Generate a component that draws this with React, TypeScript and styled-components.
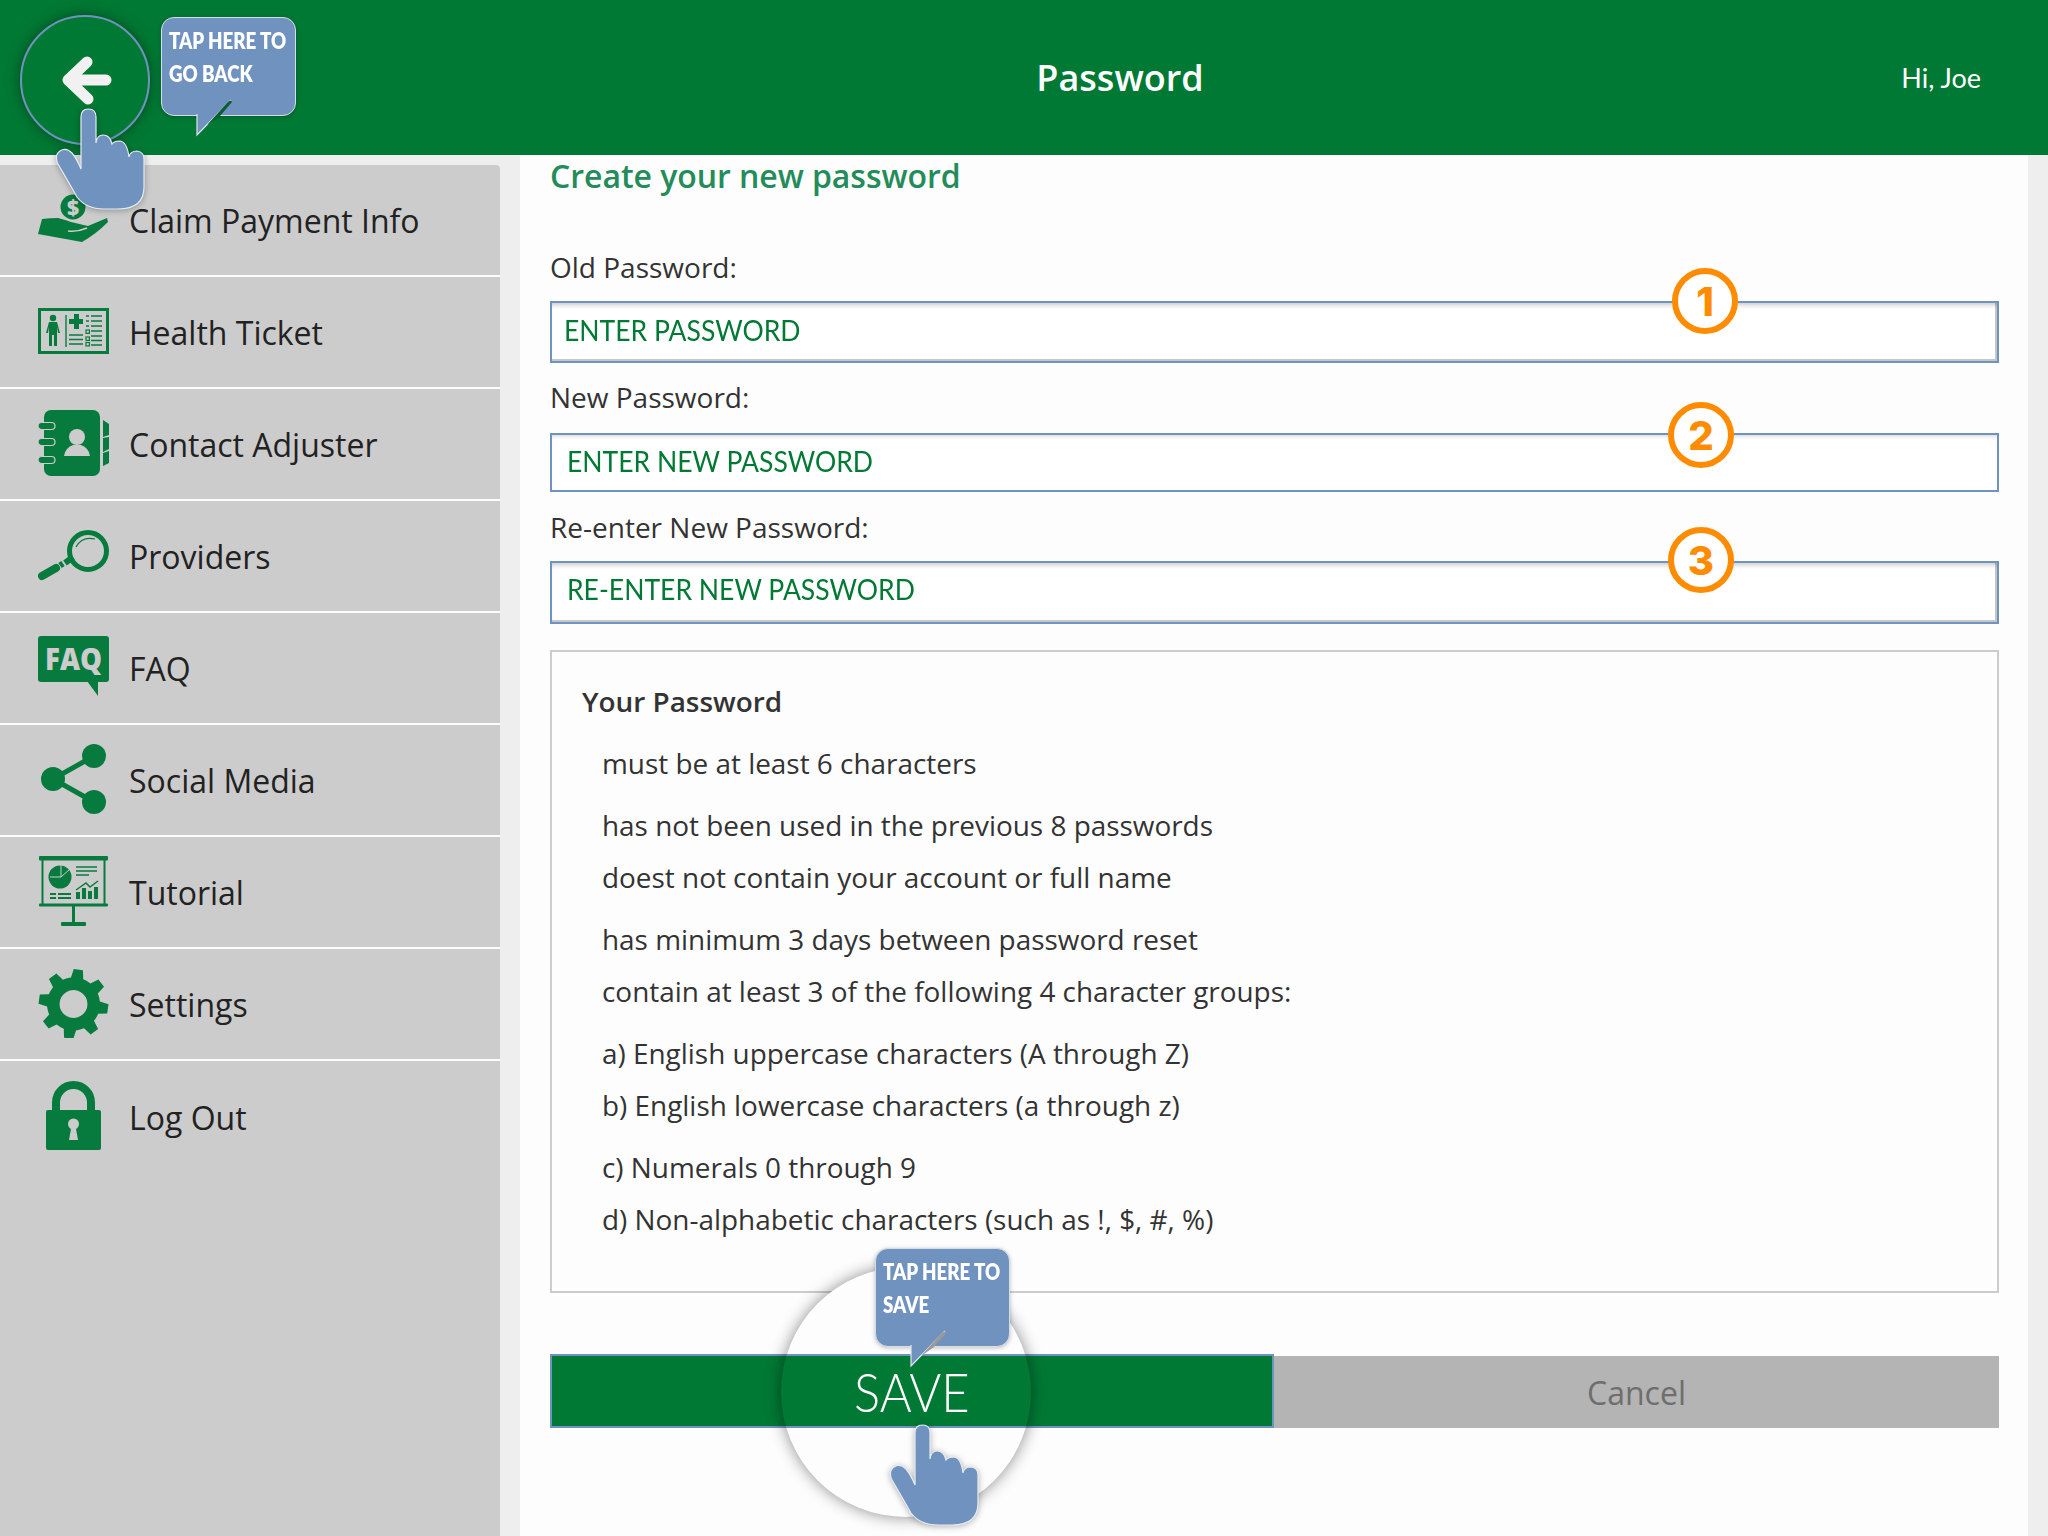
import React, {FC, ReactNode} from "react";
import styled, {createGlobalStyle} from "styled-components";

const GREEN = "#007934";
const ICON = "#077b3e";
const BLUE = "#7092be";

const GlobalStyle = createGlobalStyle`
  html, body {
    margin: 0;
    padding: 0;
    background: #eeeeee;
  }
  * { box-sizing: border-box; }
`

const gearPath = (() => {
    const cx = 35.5, cy = 36, teeth = 8, outer = 35, inner = 26.5
    const pts: string[] = []
    for (let i = 0; i < teeth; i++) {
        const a = (i / teeth) * Math.PI * 2 - Math.PI / 2 + 0.14
        const step = (Math.PI * 2) / teeth
        const at = (r: number, t: number) =>
            `${(cx + r * Math.cos(t)).toFixed(2)} ${(cy + r * Math.sin(t)).toFixed(2)}`
        pts.push(`${i === 0 ? "M" : "L"}${at(inner, a - step * 0.3)}`)
        pts.push(`L${at(outer, a - step * 0.17)}`)
        pts.push(`L${at(outer, a + step * 0.17)}`)
        pts.push(`L${at(inner, a + step * 0.3)}`)
        pts.push(`A${inner} ${inner} 0 0 1 ${at(inner, a + step * 0.7)}`)
    }
    return pts.join(" ") + " Z M35.5 22 a14 14 0 1 0 0.01 0 Z"
})()

const icons: Record<string, ReactNode> = {
    claim: <>
        <circle cx="35" cy="23" r="12.5" fill={ICON}/>
        <text x="35" y="31" textAnchor="middle" fontFamily="'Open Sans', sans-serif" fontWeight="800" fontSize="21"
              fill="#ccc">$</text>
        <path d="M0 50 L4 35 Q12 34 20 34 Q28 36 33 38 L50 42 L69 34 L70 38 Q58 50 44 58 Z" fill={ICON}/>
        <path d="M30 47 Q40 48 49 44" stroke="#ccc" strokeWidth="1.6" fill="none"/>
    </>,
    ticket: <>
        <rect x="1.5" y="13.5" width="68" height="43" fill="none" stroke={ICON} strokeWidth="3"/>
        <circle cx="15" cy="22" r="3.2" fill={ICON}/>
        <path d="M11 26 H19 L22 37 H20 L19 31 V50 H16 V39 H14 V50 H11 V31 L10 37 H8 Z" fill={ICON}/>
        <path d="M28 19 V51" stroke={ICON} strokeWidth="1.4"/>
        <path d="M36 18 H41 V23 H45 V28 H41 V33 H36 V28 H31 V23 H36 Z" fill={ICON}/>
        <path d="M31 39 H45 M31 43.5 H45 M31 48 H45" stroke={ICON} strokeWidth="1.6"/>
        <path d="M53 20 H64 M53 25 H64 M53 30 H64 M53 35 H64 M53 40 H64 M53 44.5 H64 M53 49 H64" stroke={ICON}
              strokeWidth="1.6"/>
        <path d="M48 20 H51 M48 25 H51 M48 30 H51" stroke={ICON} strokeWidth="1.6"/>
        <rect x="48" y="34" width="3.4" height="3.4" fill="none" stroke={ICON} strokeWidth="1.2"/>
        <rect x="48" y="41" width="3.4" height="3.4" fill="none" stroke={ICON} strokeWidth="1.2"/>
        <rect x="48" y="46.5" width="3.4" height="3.4" fill="none" stroke={ICON} strokeWidth="1.2"/>
    </>,
    contact: <>
        <rect x="6" y="2" width="56" height="66" rx="7" fill={ICON}/>
        <path d="M65 12 L71 16 V27 L65 29 Z M65 30 L71 29 V41 L65 44 Z M65 45 L71 43 V55 L65 58 Z" fill={ICON}/>
        {[18, 34, 52].map(y =>
            <rect key={y} x="0" y={y - 3.5} width="17" height="7" rx="3.5" fill={ICON} stroke="#ccc" strokeWidth="1.2"/>)}
        <circle cx="39" cy="29" r="8" fill="#ccc"/>
        <path d="M26 48 Q27 40 35 37 H43 Q51 40 52 48 Z" fill="#ccc"/>
    </>,
    providers: <>
        <circle cx="50" cy="31" r="18.5" fill="none" stroke={ICON} strokeWidth="5"/>
        <path d="M38 27 Q44 16 57 19" fill="none" stroke={ICON} strokeWidth="1.2"/>
        <path d="M4 56 L18 48" stroke={ICON} strokeWidth="8" strokeLinecap="round"/>
        <path d="M22 45.5 L25 43.5 M27 43 L35 37" stroke={ICON} strokeWidth="6"/>
    </>,
    faq: <>
        <rect x="0" y="4" width="71" height="46" rx="3" fill={ICON}/>
        <path d="M49 49 L60 64 V49 Z" fill={ICON}/>
        <text x="35.5" y="38" textAnchor="middle" textLength="57" lengthAdjust="spacingAndGlyphs"
              fontFamily="'Open Sans', sans-serif" fontWeight="800" fontSize="30" fill="#ccc">FAQ</text>
    </>,
    social: <>
        <path d="M56 12 L15 35 L56 58" fill="none" stroke={ICON} strokeWidth="5"/>
        <circle cx="56" cy="12" r="12" fill={ICON}/>
        <circle cx="15" cy="35" r="12" fill={ICON}/>
        <circle cx="56" cy="58" r="12" fill={ICON}/>
    </>,
    tutorial: <>
        <rect x="1" y="0" width="69" height="4.5" rx="1" fill={ICON}/>
        <rect x="1" y="47.5" width="69" height="3" rx="1" fill={ICON}/>
        <path d="M4.5 3 V48 M66.5 3 V48" stroke={ICON} strokeWidth="2"/>
        <path d="M35.5 50 V67" stroke={ICON} strokeWidth="3"/>
        <rect x="23" y="66" width="25" height="4" rx="1" fill={ICON}/>
        <circle cx="22" cy="21" r="11.5" fill={ICON}/>
        <path d="M23 9 V21 L32 13 M23 21 H12" fill="none" stroke="#ccc" strokeWidth="1"/>
        <path d="M38 11 H59 M38 15 H59 M38 19 H51" stroke={ICON} strokeWidth="1.4"/>
        <path d="M12 38 H18 M20 38 H33 M12 42 H18 M20 42 H33" stroke={ICON} strokeWidth="2"/>
        <path d="M38 34 L48 27 L52 31 L60 25" fill="none" stroke={ICON} strokeWidth="1.5"/>
        <path d="M38 36 H42 V43 H38 Z M44 32 H48 V43 H44 Z M50 35 H54 V43 H50 Z M56 31 H60 V43 H56 Z" fill={ICON}/>
    </>,
    settings: <path d={gearPath} fill={ICON} fillRule="evenodd"/>,
    logout: <>
        <path d="M18 30 V21.5 A17.5 17.5 0 0 1 53 21.5 V30" fill="none" stroke={ICON} strokeWidth="8"/>
        <rect x="8" y="29" width="55" height="40" rx="2" fill={ICON}/>
        <circle cx="35.5" cy="43" r="5.5" fill="#ccc"/>
        <path d="M33.5 45 H37.5 L40 59 H31 Z" fill="#ccc"/>
    </>
}

const menuItems = [
    {key: "claim", label: "Claim Payment Info"},
    {key: "ticket", label: "Health Ticket"},
    {key: "contact", label: "Contact Adjuster"},
    {key: "providers", label: "Providers"},
    {key: "faq", label: "FAQ"},
    {key: "social", label: "Social Media"},
    {key: "tutorial", label: "Tutorial"},
    {key: "settings", label: "Settings"},
    {key: "logout", label: "Log Out"},
]

const passwordFields = [
    {label: "Old Password:", hint: "ENTER PASSWORD", lead: 0, gap: 14, height: 62, inset: 12, lift: 5, sunken: true, digit: "1", badgeLeft: 1120, badgeTop: -35},
    {label: "New Password:", hint: "ENTER NEW PASSWORD", lead: 0, gap: 16, height: 59, inset: 15, lift: 5, sunken: false, digit: "2", badgeLeft: 1116, badgeTop: -33},
    {label: "Re-enter New Password:", hint: "RE-ENTER NEW PASSWORD", lead: 1, gap: 14, height: 63, inset: 15, lift: 8, sunken: true, digit: "3", badgeLeft: 1116, badgeTop: -36},
]

const ruleGroups = [
    ["must be at least 6 characters"],
    ["has not been used in the previous 8 passwords", "doest not contain your account or full name"],
    ["has minimum 3 days between password reset", "contain at least 3 of the following 4 character groups:"],
    ["a) English uppercase characters (A through Z)", "b) English lowercase characters (a through z)"],
    ["c) Numerals 0 through 9", "d) Non-alphabetic characters (such as !, $, #, %)"],
]

const PointingHand: FC<{ left: number, top: number }> = ({left, top}) =>
    <HandSvg $left={left} $top={top} width="91" height="102" viewBox="-1 -1 91 102">
        <path
            d="M25 60 L25 8 Q25 0 32.500 0 Q40 0 40 8 L40 34 Q41 26 47 26 Q54 26 56 35 Q58 32 64 32 Q71 33 73 48 Q74 42 81 42 Q88 43 88 50 L88 78 Q88 100 62 100 L48 100 Q30 100 21 88 Q12 72 2 55 Q-2 46 4 42 Q10 38 16 44 Q21 50 25 60 Z"
            fill={BLUE} stroke="#e6ecf3" strokeWidth="1.2"/>
    </HandSvg>

const TapBubble: FC<{ left: number, top: number, slit: string, lines: string[] }> = ({left, top, slit, lines}) =>
    <Bubble $left={left} $top={top}>
        {lines.map(l => <BubbleLine key={l}>{l}</BubbleLine>)}
        <BubbleTail width="80" height="124" viewBox="0 0 80 124">
            <path d="M36 95 V118 L58 96 Z" fill={BLUE}/>
            <path d="M36 97 V118 L70 83" fill="none" stroke="#dfe5ec" strokeWidth="1.2"/>
            <path d="M46 108 L67 85 Q70 82 71 85 L59 99 Z" fill={slit}/>
        </BubbleTail>
    </Bubble>

const App: FC = () => {
    return <Page>
        <GlobalStyle/>
        <Header>
            <BackCell>
                <BackButton>
                    <svg width="60" height="60" viewBox="0 -5 60 60">
                        <path d="M27 7 L8 25 L28 44 M10 25 H46" fill="none" stroke="#f1f1f1" strokeWidth="11"
                              strokeLinecap="round" strokeLinejoin="round"/>
                    </svg>
                </BackButton>
                <TapBubble left={161} top={17} slit="#0b5c32" lines={["TAP HERE TO", "GO BACK"]}/>
                <PointingHand left={55} top={108}/>
            </BackCell>
            <PageTitle>Password</PageTitle>
            <Greeting>Hi, Joe</Greeting>
        </Header>
        <Body>
            <Sidebar>
                {menuItems.map(item =>
                    <MenuRow key={item.key}>
                        <svg width="71" height="70" viewBox="0 0 71 70">{icons[item.key]}</svg>
                        <MenuLabel>{item.label}</MenuLabel>
                    </MenuRow>)}
            </Sidebar>
            <Main>
                <Heading>Create your new password</Heading>
                <Fields>
                    {passwordFields.map(field =>
                        <div key={field.label}>
                            <FieldLabel $lead={field.lead} $gap={field.gap}>{field.label}</FieldLabel>
                            <InputBox $height={field.height} $inset={field.inset} $lift={field.lift}
                                      $sunken={field.sunken}>
                                <Hint>{field.hint}</Hint>
                                <StepBadge $left={field.badgeLeft} $top={field.badgeTop}>{field.digit}</StepBadge>
                            </InputBox>
                        </div>)}
                </Fields>
                <RulesBox>
                    <RulesTitle>Your Password</RulesTitle>
                    {ruleGroups.map(group =>
                        <RuleGroup key={group[0]}>
                            {group.map(rule => <Rule key={rule}>{rule}</Rule>)}
                        </RuleGroup>)}
                </RulesBox>
                <Actions>
                    <SpotlightFill/>
                    <SaveButton><SaveText>SAVE</SaveText></SaveButton>
                    <CancelButton>Cancel</CancelButton>
                    <SpotlightRing/>
                    <TapBubble left={325} top={-106} slit="#999999" lines={["TAP HERE TO", "SAVE"]}/>
                    <PointingHand left={339} top={70}/>
                </Actions>
            </Main>
        </Body>
    </Page>
}

export default App

const Page = styled.div`
  width: 2048px;
  height: 1536px;
  overflow: hidden;
  display: flex;
  flex-direction: column;
  background: #eeeeee;
  font-family: "Open Sans", sans-serif;
`

const Header = styled.header`
  height: 155px;
  flex: none;
  background: ${GREEN};
  display: grid;
  grid-template-columns: 432px 1fr 240px;
  align-items: center;
  color: white;
`

const BackCell = styled.div`
  height: 100%;
  padding: 15px 0 0 20px;
`

const BackButton = styled.div`
  width: 130px;
  height: 130px;
  border-radius: 50%;
  border: 2px solid ${BLUE};
  box-shadow: 0 0 14px rgba(0, 0, 0, 0.4);
  display: flex;
  align-items: center;
  justify-content: center;
  padding-left: 10px;
`

const Bubble = styled.div<{ $left: number, $top: number }>`
  position: absolute;
  left: ${p => p.$left}px;
  top: ${p => p.$top}px;
  width: 135px;
  height: 99px;
  z-index: 4;
  padding: 6px 0 0 7px;
  background: ${BLUE};
  border: 1.5px solid #d5dde8;
  border-radius: 13px;
  box-shadow: 0 1px 4px rgba(0, 0, 0, 0.25);
  color: white;
  font-family: Lato, sans-serif;
  font-weight: 800;
  font-size: 22px;
  line-height: 33px;
  white-space: nowrap;
`

const BubbleLine = styled.div`
  transform: scaleX(0.85);
  transform-origin: left center;
`

const BubbleTail = styled.svg`
  position: absolute;
  left: -1.500px;
  top: -1.500px;
  overflow: visible;
`

const HandSvg = styled.svg<{ $left: number, $top: number }>`
  position: absolute;
  left: ${p => p.$left}px;
  top: ${p => p.$top}px;
  z-index: 5;
  filter: drop-shadow(0 1px 3px rgba(0, 0, 0, 0.3));
`

const PageTitle = styled.div`
  text-align: center;
  font-size: 36px;
  font-weight: 600;
`

const Greeting = styled.div`
  text-align: right;
  padding-right: 67px;
  font-family: Lato, sans-serif;
  font-size: 27px;
  font-weight: 400;
`

const Body = styled.div`
  flex: 1;
  display: flex;
  min-height: 0;
`

const Sidebar = styled.nav`
  width: 500px;
  margin-top: 10px;
  margin-right: 20px;
  background: #cccccc;
  border-radius: 0 4px 0 0;
`

const MenuRow = styled.div`
  height: 112px;
  padding: 0 0 2px 38px;
  display: flex;
  align-items: center;
  gap: 20px;
  border-bottom: 2px solid #fdfdfd;
  &:last-child {
    border-bottom: none;
  }
`

const MenuLabel = styled.span`
  font-size: 32px;
  color: #222222;
  position: relative;
  top: 1px;
`

const Main = styled.main`
  width: 1508px;
  background: #fdfdfd;
  padding: 0 29px 0 30px;
`

const Heading = styled.h1`
  margin: 0;
  height: 42px;
  font-size: 32px;
  line-height: 42px;
  font-weight: 600;
  letter-spacing: -0.05px;
  color: #248c5a;
`

const Fields = styled.div`
  margin-top: 50px;
  display: flex;
  flex-direction: column;
  gap: 14px;
`

const FieldLabel = styled.label<{ $lead: number, $gap: number }>`
  display: block;
  height: 40px;
  line-height: 40px;
  margin-top: ${p => p.$lead}px;
  margin-bottom: ${p => p.$gap}px;
  font-size: 28px;
  color: #333333;
`

const InputBox = styled.div<{ $height: number, $inset: number, $lift: number, $sunken: boolean }>`
  position: relative;
  height: ${p => p.$height}px;
  padding: 0 0 ${p => p.$lift}px ${p => p.$inset}px;
  display: flex;
  align-items: center;
  background: white;
  border: 2px solid ${BLUE};
  box-shadow: ${p => p.$sunken
          ? "inset 0 5px 5px -3px rgba(0,0,0,0.22), inset -2px -2px 0 #c8c8c8"
          : "inset 0 4px 4px -3px rgba(0,0,0,0.18)"};
`

const Hint = styled.span`
  font-family: Lato, sans-serif;
  font-size: 29px;
  color: ${GREEN};
  transform: scaleX(0.915);
  transform-origin: left center;
`

const StepBadge = styled.div<{ $left: number, $top: number }>`
  position: absolute;
  left: ${p => p.$left}px;
  top: ${p => p.$top}px;
  width: 66px;
  height: 66px;
  border-radius: 50%;
  border: 6px solid #ff8c00;
  background: white;
  display: flex;
  align-items: center;
  justify-content: center;
  font-family: Inter, sans-serif;
  font-weight: 800;
  font-size: 40px;
  color: #ff8c00;
`

const RulesBox = styled.section`
  margin-top: 26px;
  height: 643px;
  border: 2px solid #cccccc;
  padding: 23px 0 0 30px;
  display: flex;
  flex-direction: column;
  gap: 10px;
`

const RulesTitle = styled.div`
  font-size: 27.9px;
  line-height: 52px;
  font-weight: 600;
  color: #333333;
`

const RuleGroup = styled.div`
  padding-left: 20px;
`

const Rule = styled.div`
  font-size: 27.92px;
  line-height: 52px;
  color: #333333;
`

const Actions = styled.div`
  position: relative;
  margin-top: 61px;
  height: 74px;
  display: grid;
  grid-template-columns: 724px 1fr;
`

const SaveButton = styled.div`
  position: relative;
  z-index: 1;
  background: ${GREEN};
  border: 2px solid ${BLUE};
  display: flex;
  align-items: center;
  justify-content: center;
`

const SaveText = styled.span`
  color: white;
  font-family: Lato, sans-serif;
  font-weight: 300;
  font-size: 54px;
  transform: scaleX(0.905);
`

const CancelButton = styled.div`
  position: relative;
  z-index: 1;
  margin-top: 2px;
  background: #b4b4b4;
  color: #6e6e6e;
  font-size: 32px;
  display: flex;
  align-items: center;
  justify-content: center;
`

const SpotlightFill = styled.div`
  position: absolute;
  left: 231px;
  top: -87px;
  width: 250px;
  height: 250px;
  border-radius: 50%;
  background: #fdfdfd;
`

const SpotlightRing = styled(SpotlightFill)`
  background: transparent;
  z-index: 2;
  box-shadow: 0 0 16px rgba(0, 0, 0, 0.45);
`
